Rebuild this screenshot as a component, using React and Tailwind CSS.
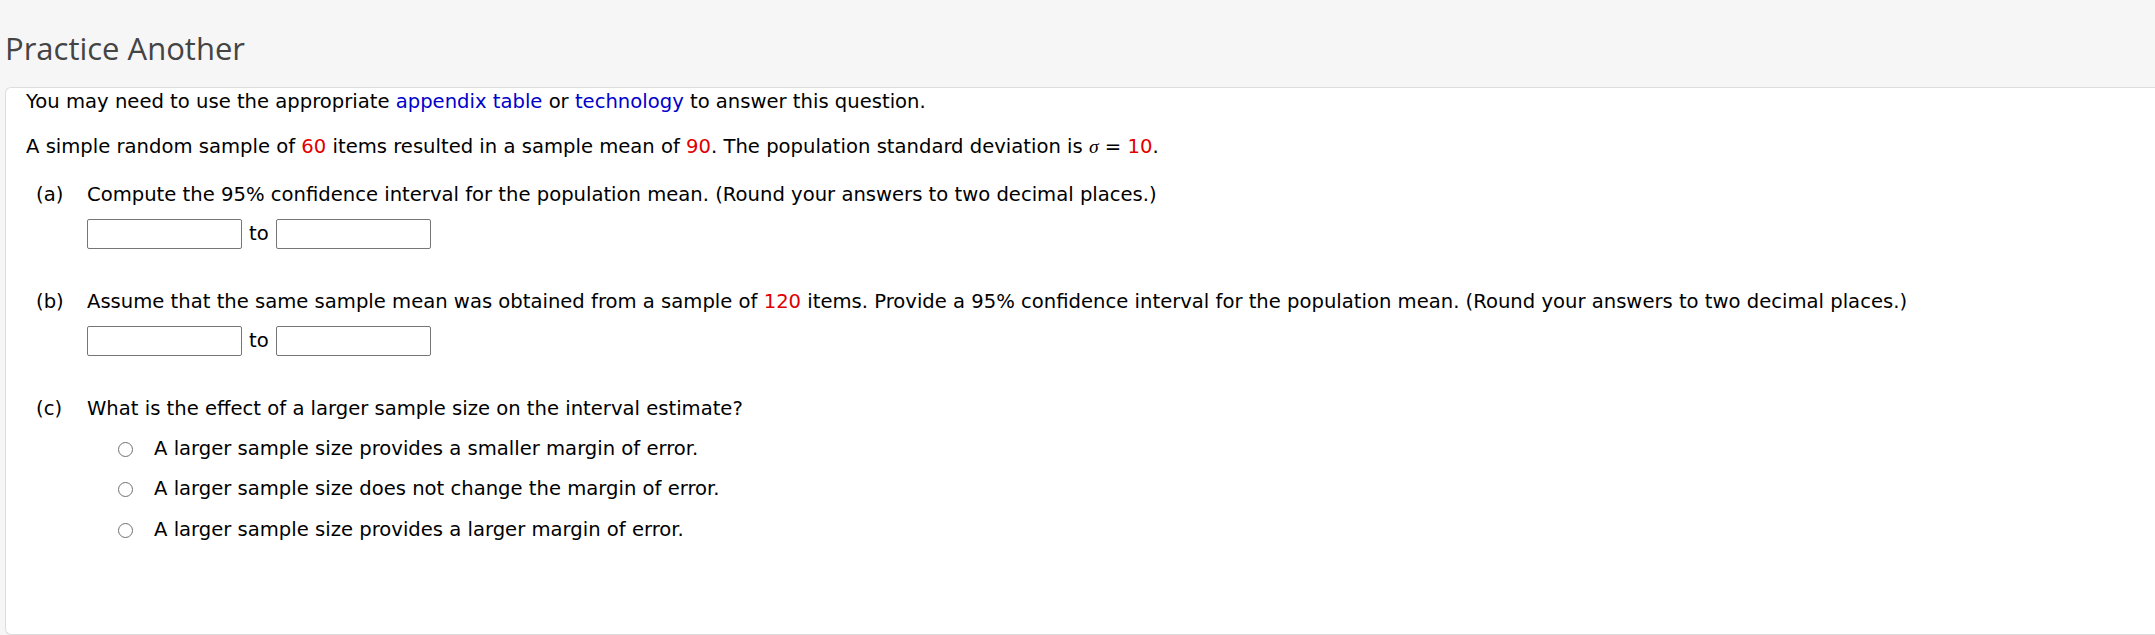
export default function App() {
  const body = { fontFamily: '"DejaVu Sans", Verdana, sans-serif' };

  const Radio = ({ children, className = '' }) => (
    <div className={`flex items-center h-6 ${className}`}>
      <span className="ml-[92px] w-[15px] h-[15px] rounded-full border border-[#707070] bg-white shrink-0"></span>
      <span className="ml-[21px]">{children}</span>
    </div>
  );

  const Inputs = () => (
    <div className="flex items-center gap-[7px] pl-[61px] mt-3">
      <div className="w-[155px] h-[30px] border border-[#767676] rounded-[2px] bg-white"></div>
      <span>to</span>
      <div className="w-[155px] h-[30px] border border-[#767676] rounded-[2px] bg-white"></div>
    </div>
  );

  return (
    <div className="min-h-screen bg-[#f6f6f6]">
      <div className="h-[87px] pl-[5px] pt-[28px]">
        <h1
          className="text-[31px] leading-[40px] text-[#444]"
          style={{ fontFamily: '"Open Sans", sans-serif' }}
        >
          Practice Another
        </h1>
      </div>

      <div
        className="ml-[5px] min-h-[548px] bg-white border border-[#ddd] border-r-0 rounded-l-md pl-5 pt-[2px] text-[19.6px] leading-6 text-black"
        style={body}
      >
        <p>
          You may need to use the appropriate{' '}
          <span className="text-[#0000cc]">appendix table</span> or{' '}
          <span className="text-[#0000cc]">technology</span> to answer this question.
        </p>

        <p className="mt-[21px]">
          A simple random sample of <span className="text-[#e00000]">60</span> items resulted in a
          sample mean of <span className="text-[#e00000]">90</span>. The population standard
          deviation is <i style={{ fontFamily: '"Liberation Serif", serif' }}>σ</i> ={' '}
          <span className="text-[#e00000]">10</span>.
        </p>

        {/* part a */}
        <div className="flex mt-6">
          <span className="w-[61px] pl-[10px] shrink-0">(a)</span>
          <span>
            Compute the 95% confidence interval for the population mean. (Round your answers to two
            decimal places.)
          </span>
        </div>
        <Inputs />

        {/* part b */}
        <div className="flex mt-[41px]">
          <span className="w-[61px] pl-[10px] shrink-0">(b)</span>
          <span>
            Assume that the same sample mean was obtained from a sample of{' '}
            <span className="text-[#e00000]">120</span> items. Provide a 95% confidence interval for
            the population mean. (Round your answers to two decimal places.)
          </span>
        </div>
        <Inputs />

        {/* part c */}
        <div className="flex mt-[41px]">
          <span className="w-[61px] pl-[10px] shrink-0">(c)</span>
          <span>What is the effect of a larger sample size on the interval estimate?</span>
        </div>
        <Radio className="mt-4">A larger sample size provides a smaller margin of error.</Radio>
        <Radio className="mt-4">A larger sample size does not change the margin of error.</Radio>
        <Radio className="mt-[17px]">A larger sample size provides a larger margin of error.</Radio>
      </div>
    </div>
  );
}
